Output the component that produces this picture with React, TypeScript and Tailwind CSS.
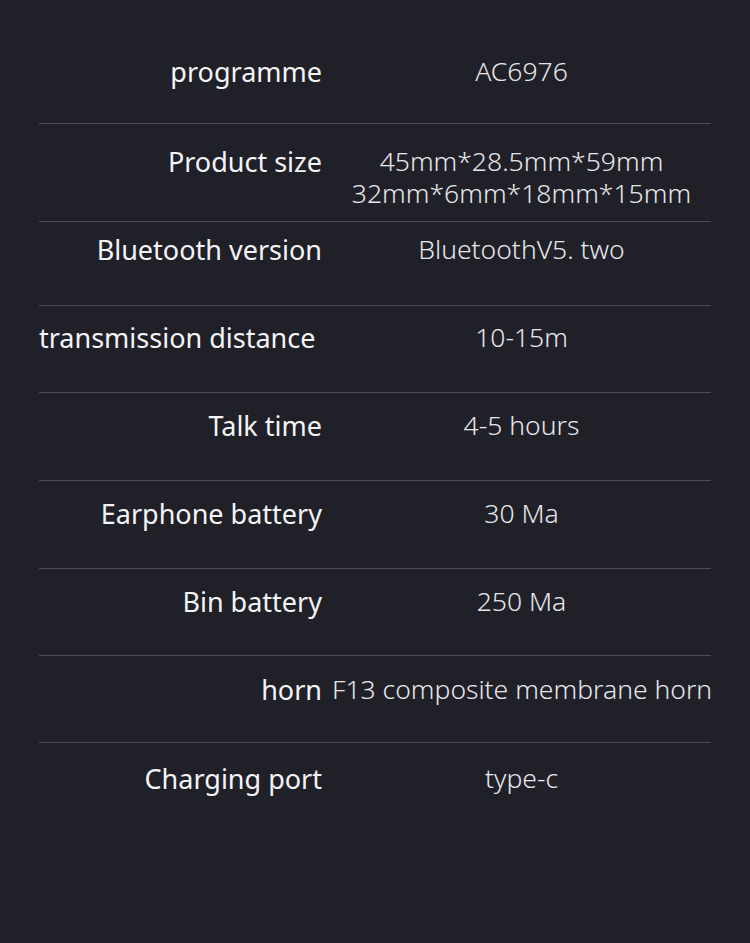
import React from 'react';

type Spec = { label: string; value: string[]; h: string; pt: string; labelPr?: string };

const specs: Spec[] = [
  { label: 'programme', value: ['AC6976'], h: 'h-[123px]', pt: 'pt-[55px]' },
  { label: 'Product size', value: ['45mm*28.5mm*59mm', '32mm*6mm*18mm*15mm'], h: 'h-[98px]', pt: 'pt-[21px]' },
  { label: 'Bluetooth version', value: ['BluetoothV5. two'], h: 'h-[84px]', pt: 'pt-[11px]' },
  { label: 'transmission distance', value: ['10-15m'], h: 'h-[87px]', pt: 'pt-[15px]', labelPr: 'pr-[7px]' },
  { label: 'Talk time', value: ['4-5 hours'], h: 'h-[88px]', pt: 'pt-[16px]' },
  { label: 'Earphone battery', value: ['30 Ma'], h: 'h-[88px]', pt: 'pt-[16px]' },
  { label: 'Bin battery', value: ['250 Ma'], h: 'h-[87px]', pt: 'pt-[16px]' },
  { label: 'horn', value: ['F13 composite membrane horn'], h: 'h-[87px]', pt: 'pt-[17px]' },
  { label: 'Charging port', value: ['type-c'], h: 'h-[201px]', pt: 'pt-[19px]' },
];

function SpecRow({ spec, first }: { spec: Spec; first: boolean }) {
  return (
    <div className={`flex ${spec.h} ${spec.pt} ${first ? '' : 'border-t border-[#4a4b53]'}`}>
      <div
        className={`w-[283px] shrink-0 text-right text-[27px] leading-[34px] font-normal text-[#f4f4f6] whitespace-nowrap ${spec.labelPr ?? ''}`}
      >
        {spec.label}
      </div>
      <div className="flex-1 pl-[10px] text-center text-[26.5px] leading-[32px] font-light text-[#e6e6ea] whitespace-nowrap">
        {spec.value.map((v) => (
          <div key={v}>{v}</div>
        ))}
      </div>
    </div>
  );
}

export default function App() {
  return (
    <div
      className="w-[750px] h-[943px] bg-[#202128] overflow-hidden"
      style={{ fontFamily: '"Noto Sans", "Noto Sans CJK SC", sans-serif' }}
    >
      <div className="mx-[39px]">
        {specs.map((s, i) => (
          <SpecRow key={s.label} spec={s} first={i === 0} />
        ))}
      </div>
    </div>
  );
}
